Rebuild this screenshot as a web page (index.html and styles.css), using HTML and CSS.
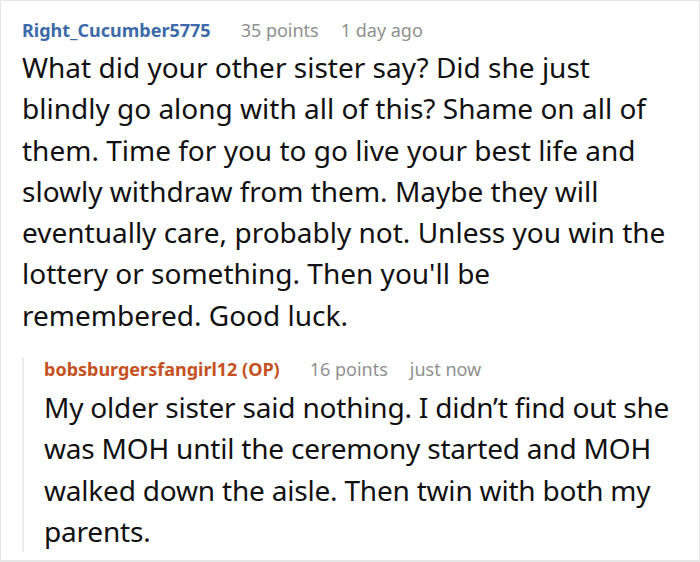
FILE: index.html
```html
<!DOCTYPE html>
<html>
<head>
<meta charset="utf-8">
<link rel="stylesheet" href="styles.css">
</head>
<body>
<div class="card">
  <div class="comment">
    <div class="meta">
      <span class="user">Right_Cucumber5775</span>
      <span class="info">35 points</span>
      <span class="info">1 day ago</span>
    </div>
    <p class="body">What did your other sister say? Did she just blindly go along with all of this? Shame on all of them. Time for you to go live your best life and slowly withdraw from them. Maybe they will eventually care, probably not. Unless you win the lottery or something. Then you'll be<br>remembered. Good luck.</p>
    <div class="reply">
      <div class="meta">
        <span class="user op">bobsburgersfangirl12 (OP)</span>
        <span class="info">16 points</span>
        <span class="info">just now</span>
      </div>
      <p class="body">My older sister said nothing. I didn’t find out she was MOH until the ceremony started and MOH walked down the aisle. Then twin with both my parents.</p>
    </div>
  </div>
</div>
</body>
</html>
```
FILE: styles.css
```css
html, body {
  margin: 0;
  padding: 0;
  background: #fff;
}
.card {
  width: 700px;
  height: 562px;
  box-sizing: border-box;
  border: 1px solid #e6e6e6;
  border-bottom-width: 2px;
  font-family: "Noto Sans", "Open Sans", sans-serif;
  overflow: hidden;
}
.comment {
  padding: 17px 22px 0 21px;
}
.meta {
  display: flex;
  gap: 30px;
  font-size: 18px;
  line-height: 24px;
}
.user {
  font-weight: bold;
  color: #3d6aa8;
}
.user.op {
  color: #c4521f;
}
.info {
  color: #909090;
}
.info + .info {
  margin-left: -8px;
}
.body {
  margin: 5px 0 0;
  font-size: 28px;
  line-height: 41.3px;
  color: #111;
}
.reply {
  margin-top: 21px;
  margin-right: -2px;
  margin-bottom: 13px;
  border-left: 2px solid #ececec;
  padding-left: 20px;
}
.reply .body {
  margin-top: 6px;
  letter-spacing: -0.2px;
}
```
